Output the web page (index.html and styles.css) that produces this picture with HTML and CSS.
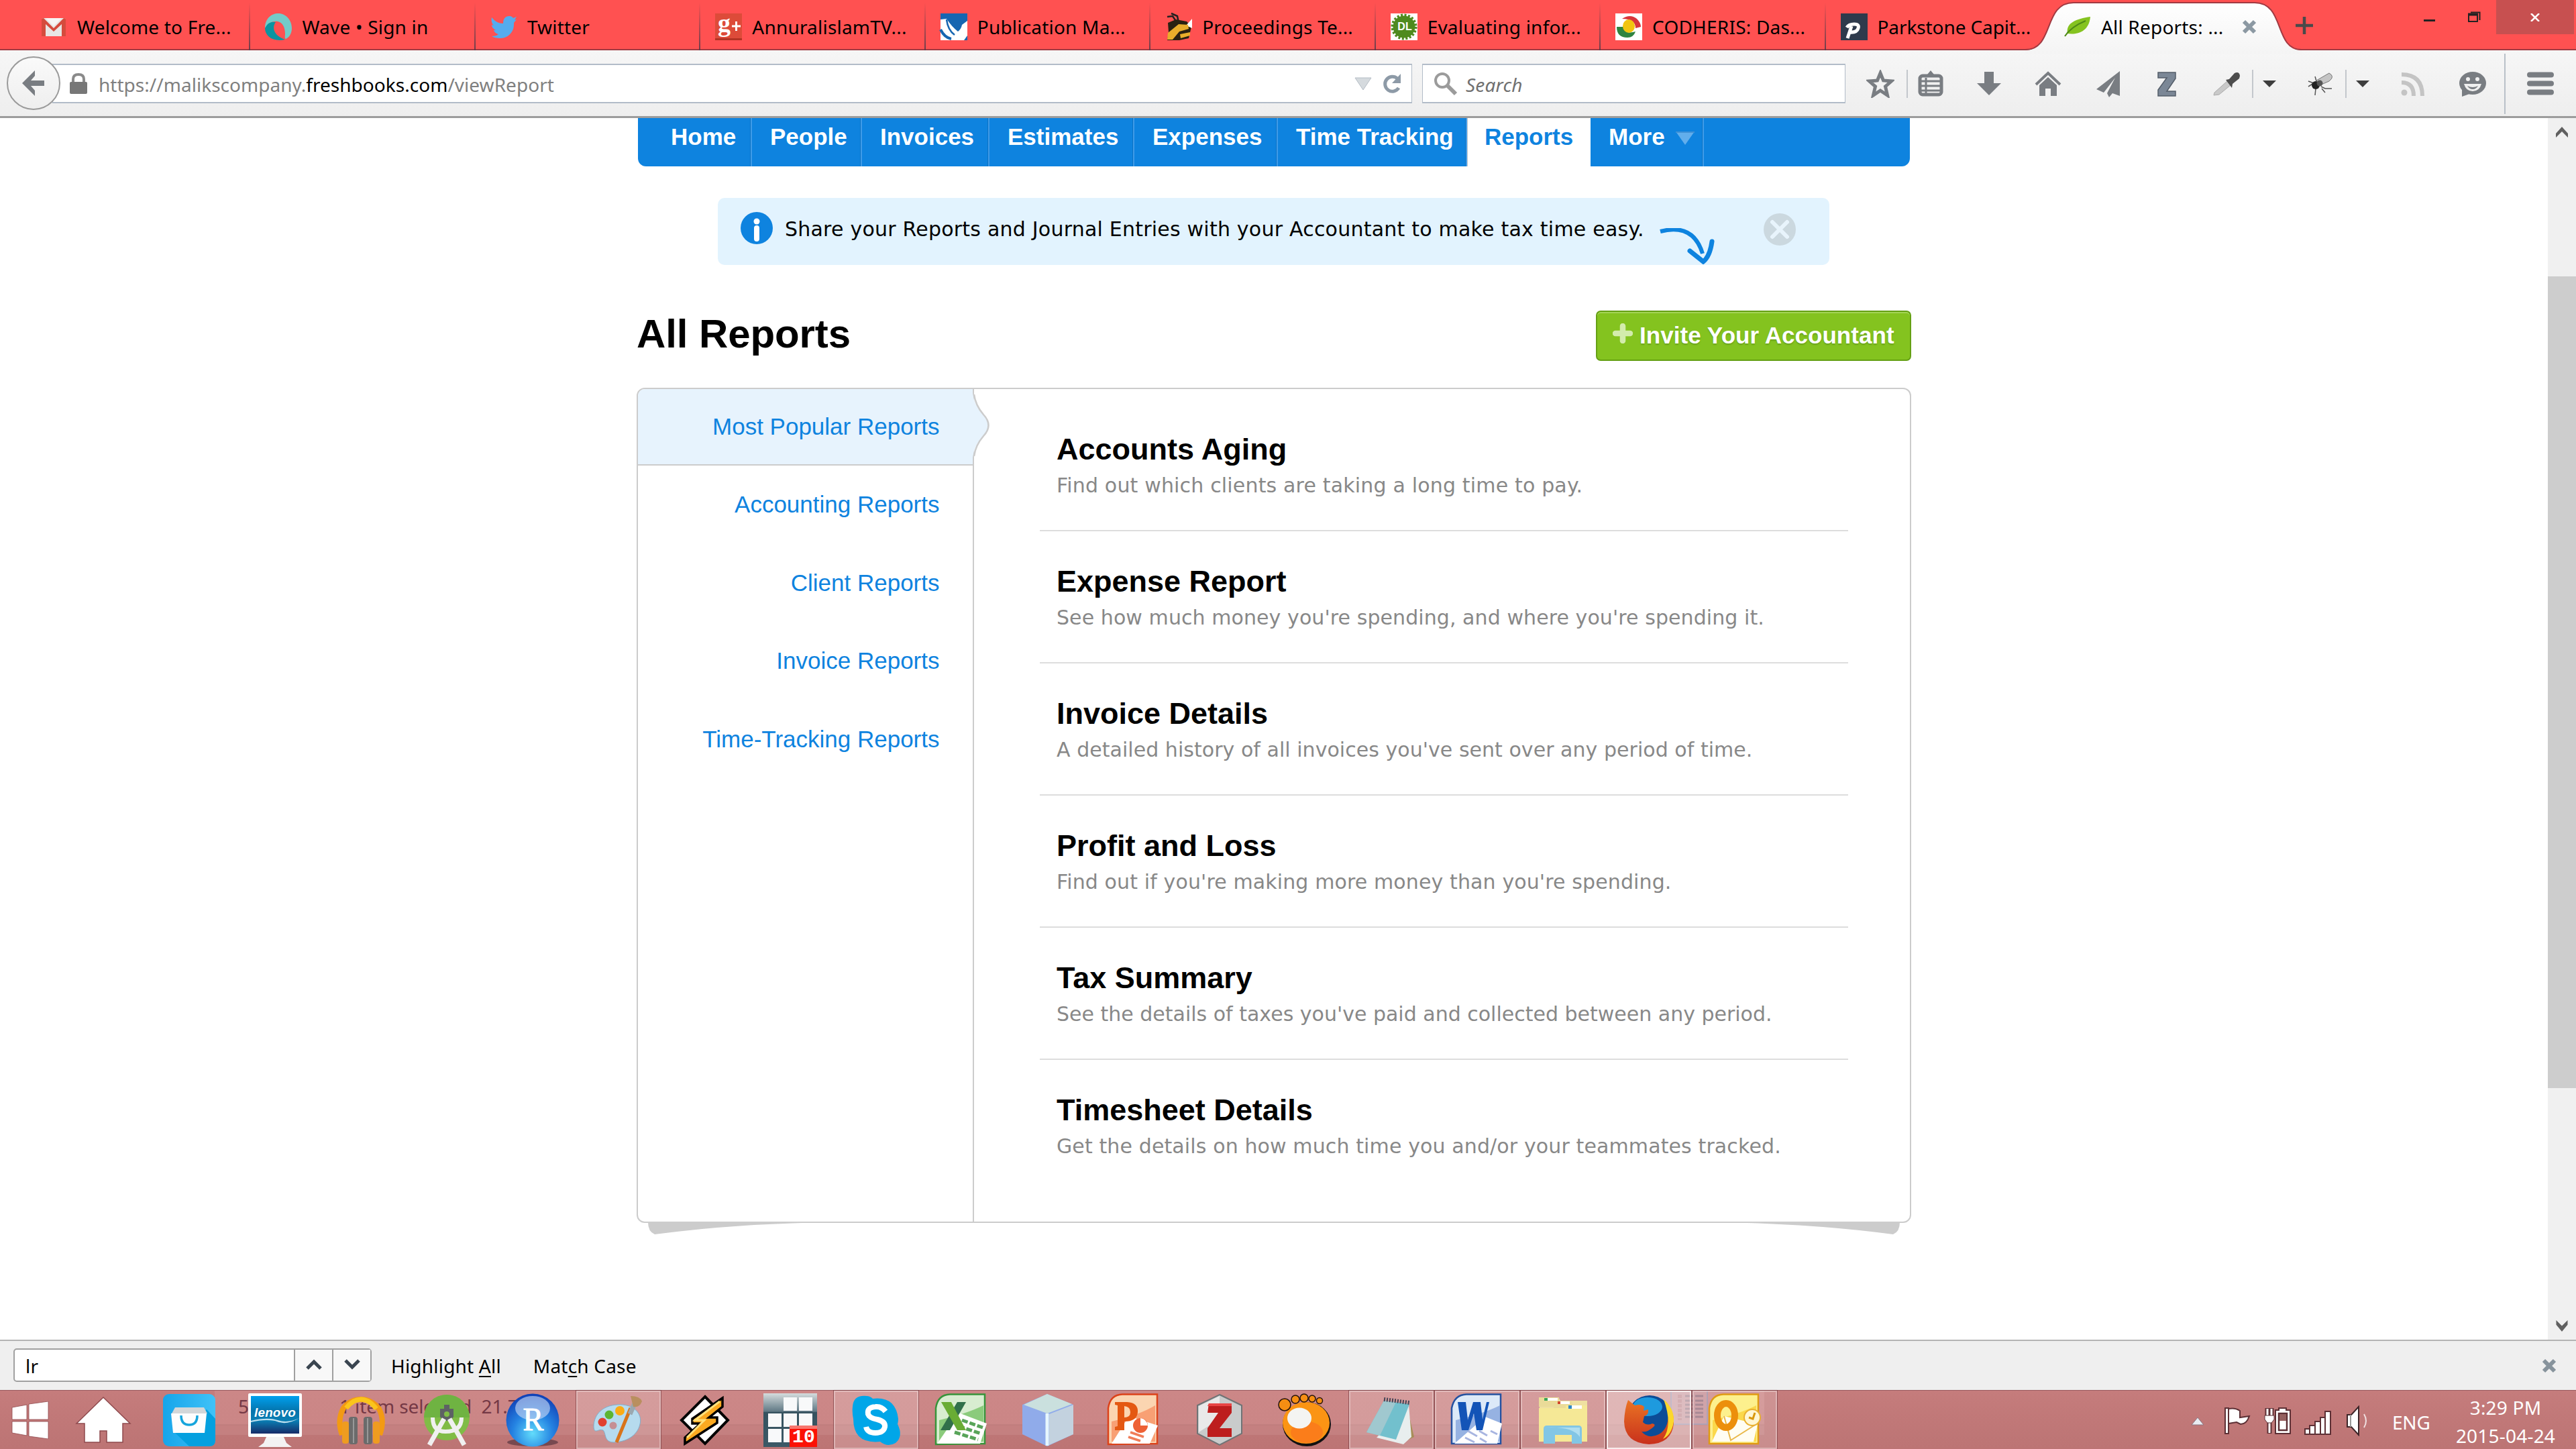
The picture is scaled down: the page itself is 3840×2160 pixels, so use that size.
FILE: index.html
```html
<!DOCTYPE html>
<html lang="en">
<head>
<meta charset="utf-8">
<title>All Reports</title>
<link rel="stylesheet" href="styles.css">
</head>
<body>
<div class="screen">
  <header class="tabstrip">
    <div class="tab"><svg class="fav" viewBox="0 0 40 40"><rect x="2" y="7" width="36" height="27" rx="3" fill="#e8e6e4"/><path d="M2 34V9q0-2 3-2l15 15L35 7q3 0 3 2v25h-6V16L20 27 8 16v18z" fill="#d54b3d"/><path d="M8 7h24L20 19z" fill="#f7f5f4"/></svg><span>Welcome to Fre...</span></div>
    <div class="tab"><svg class="fav" viewBox="0 0 40 40"><path d="M20 0C31 0 40 10 40 22c0 8-4 14-9 16-2-1-1-4-1-8 0-9-4-17-11-18C10 11 5 16 0 22 0 8 9 0 20 0z" fill="#74cbc8"/><path d="M0 22c4-8 9-10 16-9-6 8-3 20 14 26C12 43 0 34 0 22z" fill="#0c94a0"/></svg><span>Wave • Sign in</span></div>
    <div class="tab"><svg class="fav" viewBox="0 0 40 40"><path d="M2 6c5 6 10 9 17 9 0-7 3-11 9-11 3 0 5 1 6 3l5-2-3 5 3-1-4 5c1 14-9 23-20 23-6 0-10-1-13-3 5 0 8-1 10-3-4-1-6-3-7-6h3c-4-2-6-5-6-8l3 1C2 15 1 10 2 6z" fill="#55acee"/></svg><span>Twitter</span></div>
    <div class="tab"><svg class="fav" viewBox="0 0 40 40"><rect width="40" height="40" fill="#dd4b39"/><rect y="37" width="40" height="3" fill="#b33324"/><text x="4" y="27" class="serif-glyph" font-size="38">g</text><path d="M25 19h13M31.500 12v14" stroke="#fff" stroke-width="3"/></svg><span>AnnuralislamTV...</span></div>
    <div class="tab"><svg class="fav" viewBox="0 0 40 40"><rect width="40" height="40" fill="#1766b1"/><path d="M0 9L9 8Q17 20 26 27q5-4 6-10l8-6v22l-5 7H0z" fill="#fff"/><path d="M9 9q2 16 12 23" stroke="#1766b1" stroke-width="2.500" fill="none"/><path d="M0 24q6 12 16 14" stroke="#1766b1" stroke-width="4" fill="none"/></svg><span>Publication Ma...</span></div>
    <div class="tab"><svg class="fav" viewBox="0 0 40 40"><path d="M3 5l8-1 8 12M9 0l9 4 2 10" fill="none" stroke="#222" stroke-width="2.500"/><path d="M4 14l12-5 16 3 7 8-4 17-14 3H3l2-12z" fill="#2a2212"/><path d="M40 8v14L31 18z" fill="#fff"/><path d="M4 29l16-13 14 1 1 6-14 4-10 12H3z" fill="#e9ae2b"/><path d="M22 31l15-3v5l-14 4z" fill="#e9ae2b"/></svg><span>Proceedings Te...</span></div>
    <div class="tab"><svg class="fav" viewBox="0 0 40 40"><rect width="40" height="40" fill="#fff"/><circle cx="20" cy="20" r="16.500" fill="#4f8a1e"/><circle cx="20" cy="20" r="17.500" fill="none" stroke="#4f8a1e" stroke-width="4" stroke-dasharray="3 2.500"/><text x="21" y="25" text-anchor="middle" class="sans-glyph" font-size="16">DL</text></svg><span>Evaluating infor...</span></div>
    <div class="tab"><svg class="fav" viewBox="0 0 40 40"><rect width="40" height="40" fill="#fff"/><path d="M10 8Q22 0 32 8q6 6 6 12l-8 2Q30 8 10 8z" fill="#d8353a"/><path d="M2 20q0 16 16 16 9 0 12-9-16 5-18-7z" fill="#2f8440"/><ellipse cx="20" cy="19" rx="9" ry="10" fill="#f1c40f"/></svg><span>CODHERIS: Das...</span></div>
    <div class="tab"><svg class="fav" viewBox="0 0 40 40"><rect width="40" height="40" fill="#2e3a4c"/><path d="M10 37l6-18M9 21q3-5 11-5 8 0 6 6-2 7-13 6" fill="none" stroke="#fff" stroke-width="5"/></svg><span>Parkstone Capit...</span></div>
    <div class="tab active">
      <svg class="shape" viewBox="0 0 412 80"><defs><linearGradient id="tabfill" x2="0" y2="1"><stop offset="0" stop-color="#fff"/><stop offset="1" stop-color="#f4f4f4"/></linearGradient></defs><path d="M0 80V75C44 75 26 4 72 4H342C388 4 370 75 412 75V80z" fill="url(#tabfill)"/><path d="M0 74C44 74 26 4 72 4H342C388 4 370 74 412 74" fill="none" stroke="#a13a42" stroke-width="2"/></svg>
      <svg class="fav" viewBox="0 0 40 40"><path d="M39 5C18 8 2 14 5 30c14 2 32-2 34-25z" fill="#85c320"/><path d="M1 34Q10 20 32 11" fill="none" stroke="#4f8a17" stroke-width="2"/></svg><span class="title">All Reports: ...</span>
      <svg class="close" viewBox="0 0 22 22"><path d="M3 3l16 16M19 3L3 19" stroke="#8c99a3" stroke-width="6"/></svg>
    </div>
    <svg class="newtab" viewBox="0 0 26 26"><path d="M13 0v26M0 13h26" stroke="#4a4a4a" stroke-width="4.500"/></svg>
    <div class="winbuttons">
      <svg class="winmin" viewBox="0 0 17 34"><path d="M0 30.500h17" stroke="#222" stroke-width="3"/></svg>
      <svg class="winmax" viewBox="0 0 20 34"><path d="M1 21h13v11H1zM4 18.500h13.500V30" fill="none" stroke="#222" stroke-width="2"/><path d="M0 21.500h15" stroke="#222" stroke-width="4"/></svg>
      <div class="winclose"><svg viewBox="0 0 14 12"><path d="M1 0l12 12M13 0L1 12" stroke="#fff" stroke-width="2.500"/></svg></div>
    </div>
  </header>

  <div class="toolbar">
    <div class="urlbar">
      <svg class="lock" viewBox="0 0 28 32"><path d="M6 14V9q0-7 8-7t8 7v5" fill="none" stroke="#8a8a8a" stroke-width="4"/><rect x="1" y="13" width="26" height="18" rx="2" fill="#777"/></svg>
      <span class="url">https://malikscompany.<b>freshbooks.com</b>/viewReport</span>
      <svg class="drop" viewBox="0 0 26 20"><path d="M1 1h24L13 19z" fill="#d5dade" stroke="#b4bdc5"/></svg>
      <svg class="reload" viewBox="0 0 30 30"><path d="M25 21A11 11 0 1 1 23 7" fill="none" stroke="#8d9aa7" stroke-width="5"/><path d="M28 0v14H15z" fill="#8d9aa7"/></svg>
    </div>
    <div class="back"><svg viewBox="0 0 36 40"><path d="M20 1v8l-6 7h20v8H14l6 7v8L1 20z" fill="#797d82"/></svg></div>
    <div class="search">
      <svg viewBox="0 0 36 36"><circle cx="13" cy="13" r="10" fill="none" stroke="#9b9b9b" stroke-width="4"/><path d="M20 20l13 13" stroke="#9b9b9b" stroke-width="6"/></svg>
      <span>Search</span>
    </div>
    <div class="tools">
      <svg class="t-star" viewBox="0 0 42 42"><path d="M21 5l4.500 11 12 1-9 8 3 13L21 31l-10.500 7 3-13-9-8 12-1z" fill="none" stroke="#797d82" stroke-width="5"/></svg>
      <svg class="t-sep" viewBox="0 0 2 42"><path d="M1 0v42" stroke="#c3c7cc" stroke-width="2"/></svg>
      <svg class="t-clip" viewBox="0 0 38 42"><path d="M10 7h4l5-6 5 6h4v4H10z" fill="#797d82"/><rect x="3" y="9" width="32" height="28" rx="4" fill="#f0f0f0" stroke="#797d82" stroke-width="5"/><path d="M5 17h28M5 24h28M5 31h28M12 12v24" stroke="#797d82" stroke-width="3"/></svg>
      <svg class="t-down" viewBox="0 0 38 42"><path d="M12 3h14v17h11L19 38 1 20h11z" fill="#797d82"/></svg>
      <svg class="t-home" viewBox="0 0 40 42"><path d="M2 22L20 5l18 17" fill="none" stroke="#797d82" stroke-width="4"/><path d="M7 23L20 11l13 12v16h-9V28h-8v11H7z" fill="#797d82"/></svg>
      <svg class="t-plane" viewBox="0 0 36 42"><path d="M35 2L0 29l11 5L28 12 16 35l3 6 5-6 11 4z" fill="#797d82"/></svg>
      <svg class="t-z" viewBox="0 0 28 42"><path d="M1 4h26v9L14 32h13v7H1V30L14 12H1z" fill="#7b8796" stroke="#545d69" stroke-width="1.500"/></svg>
      <svg class="t-dropper" viewBox="0 0 42 42"><path d="M3 34L22 17l5 6L10 37l-8 1z" fill="#c9c9c9" stroke="#aaa"/><path d="M20 15l5-1 8-9q7-3 8 4l-1 4-10 8-1 6z" fill="#4d4d4d"/></svg>
      <svg class="t-sep" viewBox="0 0 2 42"><path d="M1 0v42" stroke="#c3c7cc" stroke-width="2"/></svg>
      <svg class="t-tri" viewBox="0 0 20 12"><path d="M0 1h20L10 11z" fill="#3d3d3d"/></svg>
      <svg class="t-fly" viewBox="0 0 42 42"><path d="M3 17l8 3-8 5M13 38l1-10M22 25l6 3 10 0M23 28l5 6M13 10l2 7" fill="none" stroke="#555" stroke-width="1.500"/><path d="M15 16L34 5q9 5 0 12l-14 6z" fill="#c4c4c4" stroke="#777"/><circle cx="14" cy="23" r="6" fill="#222"/><circle cx="20" cy="20" r="4.500" fill="#555"/></svg>
      <svg class="t-sep" viewBox="0 0 2 42"><path d="M1 0v42" stroke="#c3c7cc" stroke-width="2"/></svg>
      <svg class="t-tri" viewBox="0 0 20 12"><path d="M0 1h20L10 11z" fill="#3d3d3d"/></svg>
      <svg class="t-rss" viewBox="0 0 36 42"><circle cx="5" cy="34" r="4.500" fill="#c4c4c4"/><path d="M1 19q18 0 18 20M1 7q31 0 31 32" fill="none" stroke="#c4c4c4" stroke-width="6"/></svg>
      <svg class="t-smile" viewBox="0 0 42 42"><ellipse cx="21" cy="20" rx="20" ry="17" fill="#797d82"/><path d="M5 28l0 12 14-5z" fill="#797d82"/><path d="M8 21h26q-3 11-13 11T8 21zm5 3q8 4 16 0-3 5-8 5t-8-5z" fill="#f0f0f0" fill-rule="evenodd"/><circle cx="14" cy="14" r="3" fill="#f0f0f0"/><circle cx="28" cy="14" r="3" fill="#f0f0f0"/></svg>
      <svg class="t-longsep" viewBox="0 0 2 90"><path d="M1 0v90" stroke="#b9c0c8" stroke-width="2"/></svg>
      <svg class="t-menu" viewBox="0 0 40 42"><path d="M4 7.500h32M4 20.500h32M4 33.500h32" stroke="#797d82" stroke-width="8" stroke-linecap="round"/></svg>
    </div>
  </div>

  <div class="viewport">
    <main class="page">
      <nav class="mainnav">
        <a class="first">Home</a><a>People</a><a>Invoices</a><a>Estimates</a><a>Expenses</a><a>Time Tracking</a><a class="current">Reports</a><a>More <svg viewBox="0 0 28 20"><path d="M0 0h28L14 20z" fill="#62aeec"/><path d="M0 1h28" stroke="#3f91d6" stroke-width="2"/></svg></a>
      </nav>
      <div class="banner">
        <svg class="info" viewBox="0 0 50 50"><circle cx="25" cy="25" r="24" fill="#0e83df"/><circle cx="25" cy="15" r="4.500" fill="#fff"/><path d="M25 25v16" stroke="#fff" stroke-width="8" stroke-linecap="round"/></svg>
        <span>Share your Reports and Journal Entries with your Accountant to make tax time easy.</span>
        <svg class="swoop" viewBox="0 0 82 54"><path d="M1 5Q50-8 64 38" fill="none" stroke="#0e83df" stroke-width="6"/><path d="M45 34l20 16Q75 42 78 20" fill="none" stroke="#0e83df" stroke-width="7" stroke-linecap="round"/></svg>
        <svg class="dismiss" viewBox="0 0 48 48"><circle cx="24" cy="24" r="24" fill="#cbd8df"/><path d="M13 13l22 22M35 13L13 35" stroke="#e8f4fc" stroke-width="6" stroke-linecap="round"/></svg>
      </div>
      <div class="heading">
        <h1>All Reports</h1>
        <a class="invite"><svg viewBox="0 0 30 30"><path d="M15 4v22M4 15h22" stroke="#d3ecac" stroke-width="8.500" stroke-linecap="round"/></svg>Invite Your Accountant</a>
      </div>
      <div class="panel">
        <ul class="categories">
          <li class="selected">Most Popular Reports<svg class="notch" viewBox="0 0 28 96"><path d="M0 0Q2 18 15 32 32 48 15 64 2 78 0 96z" fill="#e7f3fd"/><path d="M2 2Q4 18 16 32 31 48 16 64 4 78 2 94" fill="none" stroke="#ccc" stroke-width="2.500"/></svg></li>
          <li>Accounting Reports</li><li>Client Reports</li><li>Invoice Reports</li><li>Time-Tracking Reports</li>
        </ul>
        <div class="reports">
          <section><h2>Accounts Aging</h2><p>Find out which clients are taking a long time to pay.</p></section>
          <section><h2>Expense Report</h2><p>See how much money you're spending, and where you're spending it.</p></section>
          <section><h2>Invoice Details</h2><p>A detailed history of all invoices you've sent over any period of time.</p></section>
          <section><h2>Profit and Loss</h2><p>Find out if you're making more money than you're spending.</p></section>
          <section><h2>Tax Summary</h2><p>See the details of taxes you've paid and collected between any period.</p></section>
          <section><h2>Timesheet Details</h2><p>Get the details on how much time you and/or your teammates tracked.</p></section>
        </div>
      </div>
      <div class="curls">
        <svg viewBox="0 0 274 18"><path d="M0 0h274Q130 2 10 18 0 14 0 0z" fill="#ccc"/></svg>
        <svg viewBox="0 0 274 18"><path d="M274 0H0q144 2 264 18 10-4 10-18z" fill="#ccc"/></svg>
      </div>
    </main>
    <div class="scrollbar">
      <svg viewBox="0 0 18 16"><path d="M0 16V10L9 0l9 10v6L9 7z" fill="#606060"/></svg>
      <div class="thumb"></div>
      <svg viewBox="0 0 18 19"><path d="M0 0v7l9 11 9-11V0L9 9z" fill="#606060"/></svg>
    </div>
  </div>

  <div class="findbar">
    <div class="findfield"><span class="query">lr</span>
      <span class="step"><svg viewBox="0 0 24 16"><path d="M2 14L12 4l10 10" fill="none" stroke="#3a4550" stroke-width="5"/></svg></span>
      <span class="step"><svg viewBox="0 0 24 16"><path d="M2 2l10 10L22 2" fill="none" stroke="#3a4550" stroke-width="5"/></svg></span>
    </div>
    <span class="opt">Highlight <u>A</u>ll</span><span class="opt second">Mat<u>c</u>h Case</span>
    <svg class="close" viewBox="0 0 22 22"><path d="M3 3l16 16M19 3L3 19" stroke="#87939c" stroke-width="6"/></svg>
  </div>

  <footer class="taskbar">
    <span class="ghost g1">5</span><span class="ghost g2">1 item selected&nbsp; 21.7</span>
    <svg class="ghostmenu" viewBox="0 0 56 52"><rect x="1" y="-2" width="54" height="52" fill="#b9a0b5" fill-opacity=".35" stroke="#8f8fae" stroke-width="1.500"/><path d="M22 8h28M22 15h28M22 21h28M22 27h28M22 33h28M22 39h28" stroke="#95707e" stroke-width="3" stroke-dasharray="12 3"/><path d="M14 6v38" stroke="#b87a80" stroke-width="6" stroke-dasharray="5 2"/></svg>
    <div class="start"><svg viewBox="0 0 56 56"><path d="M1 9l22-4v22H1zM26 4l29-4v27H26zM1 30h22v21L1 47zM26 30h29v26l-29-4z" fill="#fff" stroke="#8f4a4e" stroke-width=".8"/></svg></div>
    <div class="apps">
      <div class="app"><svg viewBox="0 0 80 80"><path d="M40 6l40 39H69v28H45V56H35v17H12V45H0z" fill="#fff" stroke="#8f4a4e" stroke-width="1.500"/></svg></div>
      <div class="app"><svg viewBox="0 0 80 80"><defs><linearGradient id="store" x2="1"><stop offset="0" stop-color="#16a5ea"/><stop offset="1" stop-color="#40c2f8"/></linearGradient></defs><rect x="1" y="1" width="78" height="78" rx="9" fill="url(#store)"/><path d="M66 24l13 14v32q0 9-9 9H40L18 58z" fill="#04a0df"/><path d="M19 21h43l5 9H14z" fill="#d3d7d9"/><path d="M13 30h53l-3 29H16z" fill="#fdfdfd"/><path d="M28 33q0 14 12 14t12-14" fill="none" stroke="#16a5dc" stroke-width="3.500"/></svg></div>
      <div class="app"><svg viewBox="0 0 80 80"><defs><linearGradient id="scr" x2="0" y2="1"><stop offset="0" stop-color="#00a0ee"/><stop offset=".4" stop-color="#0474ac"/><stop offset=".65" stop-color="#0a7fb4"/><stop offset="1" stop-color="#162b68"/></linearGradient></defs><rect width="80" height="65" rx="2" fill="#fff"/><rect x="4" y="4" width="72" height="56" fill="url(#scr)"/><path d="M4 41q25-6 40-1t32-3q-20 12-36 4-16-3-36 2z" fill="#bde0f0"/><text x="40" y="35" text-anchor="middle" class="lenovo" font-size="18" textLength="62" lengthAdjust="spacingAndGlyphs">lenovo</text><path d="M27 65h26l4 9 8 6H15l8-6z" fill="#f3f3f3"/></svg></div>
      <div class="app"><svg viewBox="0 0 80 80"><path d="M12 62Q4 40 14 22 24 9 40 9t27 14q9 17 1 39" fill="none" stroke="#f39a13" stroke-width="8"/><path d="M18 22Q28 9 40 9t23 14" fill="none" stroke="#fbc51b" stroke-width="7"/><rect x="12" y="42" width="10" height="33" rx="4" fill="#ee9c20"/><rect x="58" y="42" width="10" height="33" rx="4" fill="#ee9c20"/><rect x="22" y="35" width="13" height="41" rx="4" fill="#6b6b6b"/><rect x="44" y="35" width="13" height="41" rx="4" fill="#6b6b6b"/><path d="M29 37v37M50 37v37" stroke="#999" stroke-width="2"/></svg></div>
      <div class="app"><svg viewBox="0 0 80 80"><circle cx="40" cy="36" r="34" fill="#80bc46"/><path d="M6 36a34 34 0 0 1 68 0z" fill="#6fb342"/><path d="M36 17h8v6h6v12l-5 6h-10l-5-6V23h6z" fill="#5d6164"/><circle cx="40" cy="31" r="4" fill="#80bc46"/><path d="M36 38L14 77M44 38l22 39" stroke="#f0f0f0" stroke-width="7"/><path d="M19 36q0 21 19 21 24 0 24-21" fill="none" stroke="#f0f0f0" stroke-width="6"/></svg></div>
      <div class="app"><svg viewBox="0 0 80 80"><defs><radialGradient id="rb" cy=".75" r=".75"><stop offset="0" stop-color="#62dcfb"/><stop offset=".5" stop-color="#2583e2"/><stop offset="1" stop-color="#0f3eb5"/></radialGradient></defs><ellipse cx="40" cy="73" rx="38" ry="6" fill="#5a3640" opacity=".7"/><circle cx="40" cy="40" r="39.500" fill="url(#rb)"/><ellipse cx="40" cy="22" rx="26" ry="18" fill="#cfdcf5" opacity=".6"/><text x="41" y="55" text-anchor="middle" class="serif-r" font-size="48" textLength="31" lengthAdjust="spacingAndGlyphs">R</text></svg></div>
      <div class="app open"><svg viewBox="0 0 80 80"><path d="M38 17C62 15 76 30 72 46 68 64 50 73 32 73 18 72 22 60 17 55 10 52 4 62 3 50 3 30 18 18 38 17z" fill="#b6dbee" stroke="#7faecb"/><circle cx="32" cy="48" r="5.500" fill="#c58f94"/><circle cx="16" cy="43" r="6.500" fill="#e1402f"/><circle cx="26" cy="32" r="6.500" fill="#5cb531"/><circle cx="42" cy="26" r="7" fill="#fbab15"/><path d="M58 22L37 73" stroke="#d8741a" stroke-width="5"/><path d="M64 15l-7 16" stroke="#9ba8b0" stroke-width="7"/><path d="M58 4q14 0 17 8-4 10-13 8z" fill="#b98f5f"/></svg></div>
      <div class="app"><svg viewBox="0 0 80 80"><path d="M41 5L75 40 41 75 6 40z" fill="#fff" stroke="#000" stroke-width="4"/><path d="M67 7L22 38v7h12L11 66v9L59 44v-8H47L67 20z" fill="#fba920" stroke="#000" stroke-width="3.500"/><path d="M63 12L26 40h14L14 66" fill="none" stroke="#ffe07a" stroke-width="3"/></svg></div>
      <div class="app"><svg viewBox="0 0 80 80"><defs><linearGradient id="cal" x2="0" y2="1"><stop offset="0" stop-color="#d5dcdd"/><stop offset=".34" stop-color="#5f7884"/><stop offset=".35" stop-color="#35525f"/><stop offset="1" stop-color="#3c5966"/></linearGradient></defs><rect width="80" height="80" fill="url(#cal)"/><path d="M30 6h20v20H30zM53 6h20v20H53zM7 30h20v20H7zM30 30h20v20H30zM53 30h20v20H53zM7 53h20v20H7zM30 53h20v20H30z" fill="#f8f9fa"/><rect x="39" y="48" width="41" height="32" fill="#fb1206"/><path d="M39 48h41v5H39z" fill="#f7766f"/><text x="60" y="73" text-anchor="middle" class="mono-glyph" font-size="28">10</text></svg></div>
      <div class="app open"><svg viewBox="0 0 80 80"><path d="M5 20Q6 2 26 4q5 0 9 4 34-4 38 30 0 4-1 8 9 18-3 28-12 7-23-2Q6 76 6 38 4 28 5 20z" fill="#00a6e8"/><path d="M54 27Q48 19 39 20q-13 1-11 11 2 6 14 8 12 3 11 11-2 9-14 9-12 0-14-9" fill="none" stroke="#fff" stroke-width="8"/></svg></div>
      <div class="app"><svg viewBox="0 0 80 80"><path d="M1 76V22Q4 2 22 1.500h52V75z" fill="#d8edd0" stroke="#37943a" stroke-width="2.500"/><path d="M6 40Q48 30 72 18v54H6z" fill="#8bcb7c"/><path d="M35 29l42 16-10 30H3z" fill="#fff"/><path d="M40 40l31 11M35 49l33 11M29 58l35 11" stroke="#58a459" stroke-width="5" stroke-dasharray="9 3"/><path d="M33 13h13L22 55H8z" fill="#31704a"/><path d="M9 13h15l22 42H33z" fill="#69ac34"/></svg></div>
      <div class="app"><svg viewBox="0 0 80 80"><path d="M39 1l39 16v44L39 79 2 61V17z" fill="#90abea"/><path d="M39 1l37 15-37 14L4 17z" fill="#cae0de"/><path d="M42 31l36-14v44L42 77z" fill="#c3d2df"/><path d="M39 30v48" stroke="#e7f6fd" stroke-width="5"/></svg></div>
      <div class="app"><svg viewBox="0 0 80 80"><path d="M2 76V22Q5 2 23 1.500h52V75z" fill="#fbd5b1" stroke="#dc4219" stroke-width="2.500"/><path d="M7 42Q49 32 72 18v54H7z" fill="#f8a074"/><path d="M33 34l43 14-12 27H7z" fill="#fff"/><circle cx="50" cy="48" r="11" fill="#ee6135"/><path d="M50 48V37q9 1 11 11z" fill="#fff"/><path d="M35 58l20 7M32 65l18 6" stroke="#f07d58" stroke-width="3.500"/><path d="M12 13h18q17 1 16 15t-20 14v13H12v-5l4-1V18l-4-1zM26 19v17q9 0 9-8t-9-9z" fill="#e45812" fill-rule="evenodd"/></svg></div>
      <div class="app"><svg viewBox="0 0 80 80"><path d="M40 2l33 16v42L40 77 7 60V18z" fill="#c9cbcb" stroke="#6f7375" stroke-width="2"/><path d="M40 4v34L9 58V19z" fill="#e9e9e9"/><path d="M24 15h34v14L40 52h18v13H22V52l16-23H22z" fill="#bd1e1e"/><path d="M24 15h34v4H22z" fill="#e84545"/></svg></div>
      <div class="app"><svg viewBox="0 0 80 80"><ellipse cx="42" cy="46" rx="36" ry="33" fill="#111"/><ellipse cx="41" cy="44" rx="35" ry="31" fill="#fb9414"/><ellipse cx="42" cy="58" rx="24" ry="16" fill="#fb7d1a"/><ellipse cx="31" cy="37" rx="18" ry="15.500" fill="#f4f4f2"/><g fill="#f58e13" stroke="#24120a" stroke-width="1.500"><circle cx="9" cy="17" r="9"/><circle cx="25" cy="9" r="6"/><circle cx="38" cy="7" r="6"/><circle cx="50" cy="8" r="5"/><circle cx="61" cy="11" r="4.500"/></g></svg></div>
      <div class="app open"><svg viewBox="0 0 80 80"><path d="M64 22l10 43-12 6z" fill="#a78e59"/><path d="M66 17l4 48-12 11L18 66z" fill="#e8eeee"/><path d="M29 11l38 5-20 53L3 58z" fill="#72c0cd"/><path d="M29 11l18 2L23 63 3 58z" fill="#a0c8cf"/><path d="M29 9l38 5" stroke="#445" stroke-width="6" stroke-dasharray="2 2"/></svg></div>
      <div class="app open"><svg viewBox="0 0 80 80"><path d="M2 75V22Q6 2 24 1.500h51V75z" fill="#dce9f8" stroke="#2451a0" stroke-width="2.500"/><path d="M8 40Q50 30 74 18v54H8z" fill="#96b2e2"/><path d="M52 35l25 10-7 30H6z" fill="#fff"/><path d="M26 56l14 8M43 56l12 7M22 66l14 7M60 56l10 5M44 67l10 6" stroke="#a8b5e0" stroke-width="3"/><path d="M11 13h12l3 27 8-27h11l3 26 6-26h4l-10 42H39l-4-25-8 25H17z" fill="#1354b7"/></svg></div>
      <div class="app open"><svg viewBox="0 0 80 80"><path d="M5 6h28l3 5h40v61H5z" fill="#efe0a1"/><path d="M4 6h30v14H4zM26 12h28v12H26z" fill="#eadb98"/><path d="M4 22h40v-4h32v54H4z" fill="#f5e896"/><path d="M12 7h20v4H12z" fill="#fff"/><path d="M12 7h5v4h-5z" fill="#3ba558"/><path d="M32 12h18v4H32z" fill="#fff"/><path d="M32 12h4v4h-4z" fill="#d2452e"/><path d="M48 18h20v5H48z" fill="#fff"/><path d="M48 18h5v5h-5z" fill="#2f88c7"/><path d="M11 75V53q0-5 5-5h47q5 0 5 5v22H53V62H28v13z" fill="#82c6e5"/><path d="M14 51q40-2 51 14V51z" fill="#b0def0"/></svg></div>
      <div class="app open focus"><svg viewBox="0 0 80 80"><defs><linearGradient id="ff" x2="0" y2="1"><stop offset="0" stop-color="#ea7424"/><stop offset="1" stop-color="#c8301c"/></linearGradient></defs><circle cx="41" cy="36" r="33" fill="#0c4c97"/><ellipse cx="38" cy="20" rx="22" ry="14" fill="#1e9ade"/><path d="M9 10l10 8q9-3 14 2l-1 6 7-2q1 8-6 10l-2 9q6 6 14 2 6 1 2 5-10 9-18 7 10 12 26 4 14-8 14-30l-3-18q12 14 11 32-3 30-37 31Q4 74 3 42 4 22 9 10z" fill="url(#ff)"/><path d="M62 9q16 14 15 33-3 20-16 26Q76 48 62 9z" fill="#fcd72c"/></svg></div>
      <div class="app open"><svg viewBox="0 0 80 80"><path d="M2 75V22Q5 2 23 1.500h52V75z" fill="#fdf08d" stroke="#e09a12" stroke-width="2.500"/><path d="M7 40Q49 30 72 18v54H7z" fill="#fbd84b"/><path d="M24 34l50 12-6 26H6z" fill="#fffdf2"/><path d="M24 34l10 36 38-24" fill="none" stroke="#e9b849" stroke-width="2"/><ellipse cx="27" cy="33" rx="13" ry="18" fill="none" stroke="#ec8f0c" stroke-width="10"/><circle cx="66" cy="36" r="12" fill="#fff6d2" stroke="#e9b030" stroke-width="2"/><path d="M70 29l-3 9-6-2" fill="none" stroke="#d9980c" stroke-width="3"/></svg></div>
    </div>
    <div class="tray">
      <svg class="up" viewBox="0 0 20 13"><path d="M10 1l9 11H1z" fill="#e9ecf2" stroke="#8b7581"/></svg>
      <svg class="flag" viewBox="0 0 40 40"><path d="M2 1h5v38H2z" fill="#fff" stroke="#5d3035" stroke-width="2"/><path d="M7 2q10-2 17 3v10l14-2q-4 12-13 12l-6-3-12 2z" fill="#fff" stroke="#5d3035" stroke-width="2"/></svg>
      <svg class="plug" viewBox="0 0 40 40"><path d="M5 1v11M11 1v11M8 18v21" stroke="#5d3035" stroke-width="7"/><path d="M5 2v10M11 2v10M8 18v20" stroke="#fff" stroke-width="3"/><path d="M1 12h14v6l-4 5H5l-4-5z" fill="#fff" stroke="#5d3035"/><path d="M17 4h5V1h11v3h6v35H17z" fill="#fff" stroke="#5d3035" stroke-width="2"/><rect x="22" y="9" width="12" height="25" fill="#fff" stroke="#5d3035" stroke-width="2.500"/><rect x="23" y="10" width="10" height="10" fill="#95605f"/></svg>
      <svg class="signal" viewBox="0 0 40 36"><path d="M1 27h7v8H1zM8 22h8v13H8zM16 16h8v19h-8zM24 10h7v25h-7zM31 1h8v34h-8z" fill="#fff" stroke="#5d3035" stroke-width="2"/></svg>
      <svg class="vol" viewBox="0 0 34 46"><path d="M2 14h6l11-12v42L8 32H2z" fill="#fff" stroke="#3d2528" stroke-width="2"/><path d="M7 14v18" stroke="#999" stroke-width="2"/><path d="M27 13q6 10 0 20" fill="none" stroke="#f0dfe0" stroke-width="2"/></svg>
      <span class="lang">ENG</span>
      <span class="clock"><span>3:29 PM</span><span>2015-04-24</span></span>
    </div>
  </footer>
</div>
</body>
</html>
```
FILE: styles.css
```css
* { box-sizing: border-box; }
body { margin: 0; background: #fff; }
h1, h2, p, ul { margin: 0; padding: 0; font-weight: normal; }
svg { display: block; flex: none; }

.screen {
  width: 3840px;
  height: 2160px;
  overflow: hidden;
  display: flex;
  flex-direction: column;
  font: 28px/40px "Noto Sans", "Open Sans", sans-serif;
  letter-spacing: 0.2px;
  color: #000;
}

/* tab strip */
.tabstrip {
  height: 75px;
  flex: none;
  display: flex;
  padding-left: 38px;
  background: linear-gradient(#a13a42, #a13a42) bottom / 100% 2px no-repeat #ff5151;
  position: relative;
  z-index: 1;
}
.tab {
  width: 335.45px;
  flex: none;
  display: flex;
  align-items: center;
  gap: 15px;
  padding: 5px 0 0 22px;
  white-space: nowrap;
  background: linear-gradient(rgba(90, 60, 75, 0) 5%, rgba(90, 60, 75, .9)) right / 2px 100% no-repeat;
}
.tab:nth-child(9) { background: none; letter-spacing: -0.1px; }
.fav { width: 40px; height: 40px; overflow: visible; }
.serif-glyph { font-family: "Liberation Serif", serif; font-weight: bold; fill: #fff; }
.sans-glyph { font-family: "Liberation Sans", sans-serif; font-weight: bold; fill: #fff; }
.mono-glyph { font-family: "Liberation Mono", monospace; font-weight: bold; fill: #fff; }
.serif-r { font-family: "Liberation Serif", serif; fill: #fff; stroke: #fff; }
.lenovo { font-family: "Liberation Sans", sans-serif; font-weight: bold; font-style: italic; fill: #fff; }
.tab.active { position: relative; background: none; padding-left: 20px; }
.shape { position: absolute; left: -38px; top: 0; width: 412px; height: 80px; }
.tab.active .fav, .tab.active .title { position: relative; }
.tab.active .close { position: relative; width: 22px; height: 22px; margin-left: 13px; }
.title { width: 182px; }
.newtab { width: 26px; height: 26px; margin: 25px 0 0 30px; }
.winbuttons { margin-left: auto; display: flex; padding-right: 3px; }
.winmin { width: 17px; height: 34px; margin-right: 49px; }
.winmax { width: 20px; height: 34px; margin-right: 22px; }
.winclose { width: 116px; height: 51px; background: #c75050; display: flex; align-items: center; justify-content: center; }
.winclose svg { width: 14px; height: 12px; }

/* toolbar */
.toolbar {
  height: 101px;
  flex: none;
  display: flex;
  padding: 20px 0 0 78px;
  background: linear-gradient(#f6f6f6, #eee);
  border-bottom: 3px solid #9c9c9c;
  position: relative;
}
.urlbar, .search {
  height: 59px;
  background: #fff;
  border: solid #b2bcc8;
  border-width: 2px 1px;
  display: flex;
  align-items: center;
}
.urlbar { width: 2027px; margin-right: 15px; padding-left: 24px; }
.lock { width: 28px; height: 32px; margin-right: 16px; }
.url { color: #808080; padding-top: 3px; letter-spacing: 0.03px; margin-right: auto; }
.url b { font-weight: normal; color: #000; }
.drop { width: 26px; height: 20px; margin-right: 15px; }
.reload { width: 30px; height: 30px; margin-right: 14px; }
.back {
  position: absolute;
  left: 10px;
  top: 9px;
  width: 80px;
  height: 80px;
  border: 2px solid #9a9a9a;
  border-radius: 50%;
  background: linear-gradient(#fafafa, #eee);
  display: flex;
  align-items: center;
  justify-content: center;
}
.back svg { width: 36px; height: 40px; }
.search { width: 631px; padding-left: 16px; }
.search svg { width: 36px; height: 36px; }
.search span { font-style: italic; color: #707070; margin-left: 12px; padding-top: 3px; }
.tools { display: flex; align-items: center; height: 59px; margin-left: 31px; }
.t-star { width: 42px; height: 42px; margin-right: 18px; }
.t-sep { width: 2px; height: 42px; }
.t-clip { width: 38px; height: 42px; margin: 0 49px 0 15px; }
.t-down { width: 38px; height: 42px; margin-right: 49px; }
.t-home { width: 40px; height: 42px; margin-right: 52px; }
.t-plane { width: 36px; height: 42px; margin-right: 55px; }
.t-z { width: 28px; height: 42px; margin-right: 54px; }
.t-dropper { width: 42px; height: 42px; margin-right: 17px; }
.t-tri { width: 20px; height: 12px; margin-left: 14px; }
.t-fly { width: 42px; height: 42px; margin: 0 16px 0 45px; }
.t-rss { width: 36px; height: 42px; margin: 0 50px 0 47px; }
.t-smile { width: 42px; height: 42px; margin-right: 26px; }
.t-longsep { width: 2px; height: 90px; margin-right: 32px; }
.t-menu { width: 40px; height: 42px; }

/* web page */
.viewport { height: 1821px; flex: none; display: flex; justify-content: space-between; }
.page { width: 1900px; margin-left: 949px; }
.mainnav {
  height: 72px;
  margin: 0 2px;
  display: grid;
  grid-template-columns: 170px 164px 190px 216px 214px 282px 184px 169px 1fr;
  background: #0e83df;
  border-radius: 0 0 12px 12px;
  font: bold 35px/56px "Liberation Sans", Arial, sans-serif;
  letter-spacing: 0;
  color: #fff;
}
.mainnav a { padding-left: 27px; border-right: 2px solid #3f9be8; box-shadow: inset -1px 0 #0b72c4; display: flex; gap: 16px; white-space: nowrap; }
.mainnav a.first { padding-left: 49px; }
.mainnav a.current { background: #fff; color: #0e83df; border-right: 0; box-shadow: none; border-left: 1px solid #ccc; padding-left: 25px; }
.mainnav svg { width: 28px; height: 20px; margin-top: 20px; }
.banner {
  width: 1657px;
  height: 100px;
  margin: 47px 0 0 121px;
  padding: 0 50px 10px 33px;
  background: #e2f3fe;
  border-radius: 10px;
  display: flex;
  align-items: center;
  font: 30px/40px "DejaVu Sans", Verdana, sans-serif;
  letter-spacing: 0.22px;
  white-space: nowrap;
}
.info { width: 50px; height: 50px; margin-right: 17px; }
.banner span { padding-top: 4px; }
.swoop { width: 82px; height: 54px; margin-left: 23px; align-self: flex-start; margin-top: 45px; }
.dismiss { width: 48px; height: 48px; margin: 4px 0 0 auto; }
.heading { display: flex; justify-content: space-between; height: 75px; margin-top: 68px; }
h1 { font: bold 60px/70px "Liberation Sans", Arial, sans-serif; letter-spacing: -0.1px; }
.invite {
  width: 470px;
  height: 75px;
  display: flex;
  align-items: flex-start;
  padding-left: 23px;
  background: #84c31f;
  border: 2px solid #65a014;
  border-radius: 7px;
  box-shadow: inset 0 2px #a3d455;
  font: bold 35px/69px "Liberation Sans", Arial, sans-serif;
  letter-spacing: 0.05px;
  color: #fff;
  text-shadow: 0 2px 2px #6aa31a;
  white-space: nowrap;
}
.invite svg { width: 30px; height: 30px; margin: 17px 10px 0 0; }
.panel { height: 1245px; margin-top: 40px; border: 2px solid #ccc; border-radius: 12px; display: flex; background: #fff; }
.categories {
  width: 501px;
  list-style: none;
  border-right: 2px solid #ccc;
  font: 35px/116.500px "Liberation Sans", Arial, sans-serif;
  letter-spacing: 0;
  text-align: right;
  color: #0e83df;
}
.categories li { padding-right: 49.5px; }
.categories .selected {
  position: relative;
  height: 114px;
  line-height: 112px;
  background: #e7f3fd;
  border-bottom: 2px solid #ccc;
  border-radius: 10px 0 0 0;
}
.notch { position: absolute; left: 499px; top: 6px; width: 28px; height: 96px; }
.reports { width: 1205px; margin-left: 98px; padding-top: 15px; }
.reports section { height: 197px; padding: 48px 0 0 25px; border-bottom: 2px solid #ddd; }
.reports section:last-child { border-bottom: 0; }
h2 { font: bold 45px/54px "Liberation Sans", Arial, sans-serif; letter-spacing: 0; }
.reports p { font: 30px/40px "DejaVu Sans", Verdana, sans-serif; letter-spacing: 0.12px; color: #888; margin-top: 7px; white-space: nowrap; }
.reports section:nth-child(1) p { letter-spacing: 0.17px; }
.reports section:nth-child(2) p { letter-spacing: 0.08px; }
.reports section:nth-child(3) p { letter-spacing: 0.04px; }
.reports section:nth-child(5) p { letter-spacing: 0; }
.curls { display: flex; justify-content: space-between; padding: 0 17px; }
.curls svg { width: 274px; height: 18px; margin-top: -1px; }
.scrollbar { width: 42px; background: #f0f0f0; display: flex; flex-direction: column; align-items: center; padding: 12px 0 11px; }
.scrollbar svg { width: 18px; height: 18px; }
.thumb { width: 42px; height: 1210px; background: #cdcdcd; margin: 206px 0 auto; }

/* find bar */
.findbar {
  height: 75px;
  flex: none;
  display: flex;
  align-items: center;
  padding: 2px 29px 0 20px;
  background: #efefef;
  border-top: 2px solid #b4b4b4;
}
.findfield { width: 534px; height: 50px; display: flex; border: 2px solid #a0a0a0; border-radius: 5px; background: #fff; margin: 0 29px 3px 0; }
.query { flex: 1; padding-left: 16px; line-height: 49px; }
.step { width: 57px; border-left: 2px solid #a0a0a0; background: #f8f8f8; display: flex; align-items: center; justify-content: center; }
.step svg { width: 24px; height: 16px; margin-bottom: 3px; }
.opt { margin-bottom: 2px; }
.opt.second { margin-left: 48px; }
u { text-decoration-thickness: 2px; text-underline-offset: 4px; }
.findbar .close { width: 22px; height: 22px; margin: 0 0 2px auto; }

/* taskbar */
.taskbar {
  height: 88px;
  flex: none;
  position: relative;
  display: flex;
  border-top: 1px solid #9a5b60;
  background:
    linear-gradient(#cc8787 0, #cb8686 50px, #b97878 51px, #c58080 52px, #c48080) 320px 0 / 2310px 66px no-repeat,
    linear-gradient(#c57c7c, #bc7474);
}
.ghost { position: absolute; top: 3px; color: #743845; white-space: pre; }
.g1 { left: 355px; }
.g2 { left: 506px; letter-spacing: -0.1px; }
.ghostmenu { position: absolute; left: 2490px; top: 0; width: 56px; height: 52px; }
.start { width: 90px; padding: 16px 0 0 17px; position: relative; }
.start svg { width: 56px; height: 56px; }
.apps { display: grid; grid-template-columns: repeat(20, 128px); position: relative; }
.app { margin: 0 1px; display: flex; align-items: center; justify-content: center; }
.app svg { width: 80px; height: 80px; overflow: visible; }
.app.open { border: 2px solid rgba(240, 215, 215, .5); background: rgba(255, 255, 255, .18); outline: 1px solid rgba(110, 50, 55, .6); }
.app.focus { border-color: #f7eded; background: rgba(255, 255, 255, .4); }
.tray { margin-left: auto; display: flex; padding-right: 30px; color: #fff; }
.up { width: 20px; height: 13px; margin: 39px 29px 0 0; }
.flag { width: 40px; height: 40px; margin: 25px 20px 0 0; }
.plug { width: 40px; height: 40px; margin: 25px 20px 0 0; }
.signal { width: 40px; height: 36px; margin: 30px 25px 0 0; }
.vol { width: 34px; height: 46px; margin: 22px 35px 0 -3px; }
.lang { line-height: 94px; width: 56px; margin-right: 38px; letter-spacing: -0.2px; }
.clock { display: flex; flex-direction: column; align-items: center; width: 150px; padding-top: 4px; line-height: 42px; }
```
